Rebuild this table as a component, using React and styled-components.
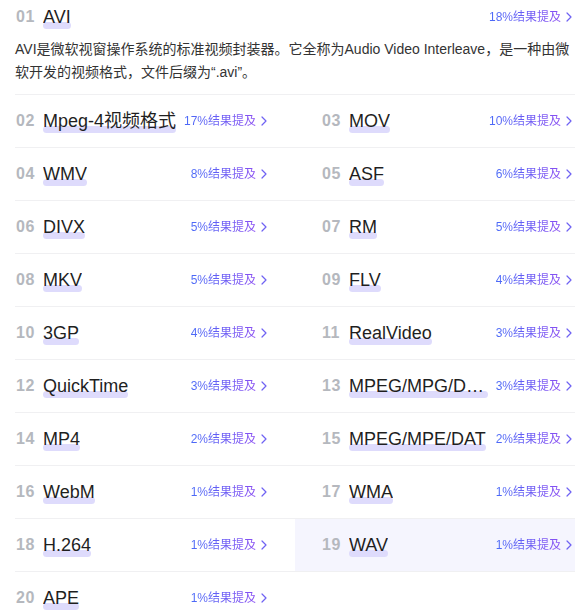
import React from "react";
import styled, { createGlobalStyle } from "styled-components";

const Global = createGlobalStyle`
  html, body { margin: 0; padding: 0; background: #fff; }
  body { font-family: "Liberation Sans", Arial, "Noto Sans CJK SC", sans-serif; }
`;

const Wrap = styled.div`
  width: 560px;
  margin-left: 15px;
  padding-top: 1px;
`;

const Top = styled.div`
  border-bottom: 1px solid #f0f0f2;
  padding-bottom: 10px;
`;

const TopRow = styled.div`
  display: flex;
  align-items: center;
  height: 32px;
  padding: 0 3px 0 1px;
`;

const Desc = styled.p`
  margin: 5px 0 0;
  font-size: 14px;
  line-height: 23px;
  color: #333;
`;

const Grid = styled.div`
  display: grid;
  grid-template-columns: 280px 280px;
`;

const Cell = styled.div`
  display: flex;
  align-items: center;
  height: 52px;
  border-bottom: 1px solid #f0f0f2;
  padding: ${(p) => (p.$right ? "0 3px 0 27px" : "0 28px 0 1px")};
  background: ${(p) => (p.$active ? "#f5f5fe" : "transparent")};
  min-width: 0;
`;

const Rank = styled.span`
  flex: none;
  width: 18px;
  margin-right: 9px;
  font-size: 16px;
  font-weight: bold;
  color: #b5b8be;
  letter-spacing: 0.5px;
`;

const Name = styled.span`
  position: relative;
  z-index: 0;
  flex: 0 1 auto;
  min-width: 0;
  max-width: 138.5px;
  font-size: 18px;
  line-height: 24px;
  color: #1f1f1f;
  white-space: nowrap;
  overflow: hidden;
  text-overflow: ellipsis;
  &::before {
    content: "";
    position: absolute;
    z-index: -1;
    left: 0;
    right: 0;
    bottom: 0;
    height: 7px;
    border-radius: 4px;
    background: #dedbfc;
  }
`;

const Mention = styled.a`
  flex: none;
  margin-left: auto;
  padding-left: 7px;
  display: flex;
  align-items: center;
  gap: 5px;
  font-size: 12px;
  line-height: 16px;
  cursor: pointer;
  text-decoration: none;
`;

const GradText = styled.span`
  background: linear-gradient(90deg, #4a6af7, #8a4ff2);
  -webkit-background-clip: text;
  background-clip: text;
  color: transparent;
`;

const Chevron = () => (
  <svg width="6" height="10" viewBox="0 0 6 10" fill="none">
    <polyline points="1,1 5,5 1,9" stroke="#6f62f3" strokeWidth="1.2" strokeLinecap="round" strokeLinejoin="round" />
  </svg>
);

const items = [
  ["02", "Mpeg-4视频格式", "17%"],
  ["03", "MOV", "10%"],
  ["04", "WMV", "8%"],
  ["05", "ASF", "6%"],
  ["06", "DIVX", "5%"],
  ["07", "RM", "5%"],
  ["08", "MKV", "5%"],
  ["09", "FLV", "4%"],
  ["10", "3GP", "4%"],
  ["11", "RealVideo", "3%"],
  ["12", "QuickTime", "3%"],
  ["13", "MPEG/MPG/DAT", "3%"],
  ["14", "MP4", "2%"],
  ["15", "MPEG/MPE/DAT", "2%"],
  ["16", "WebM", "1%"],
  ["17", "WMA", "1%"],
  ["18", "H.264", "1%"],
  ["19", "WAV", "1%"],
  ["20", "APE", "1%"],
];

const MentionLink = ({ pct }) => (
  <Mention>
    <GradText>{pct}结果提及</GradText>
    <Chevron />
  </Mention>
);

export default function App() {
  return (
    <>
      <Global />
      <Wrap>
        <Top>
          <TopRow>
            <Rank>01</Rank>
            <Name>AVI</Name>
            <MentionLink pct="18%" />
          </TopRow>
          <Desc>
            AVI是微软视窗操作系统的标准视频封装器。它全称为Audio Video Interleave，是一种由微软开发的视频格式，文件后缀为“.avi”。
          </Desc>
        </Top>
        <Grid>
          {items.map(([n, name, pct], i) => (
            <Cell key={n} $right={i % 2 === 1} $active={n === "19"}>
              <Rank>{n}</Rank>
              <Name>{name}</Name>
              <MentionLink pct={pct} />
            </Cell>
          ))}
        </Grid>
      </Wrap>
    </>
  );
}
